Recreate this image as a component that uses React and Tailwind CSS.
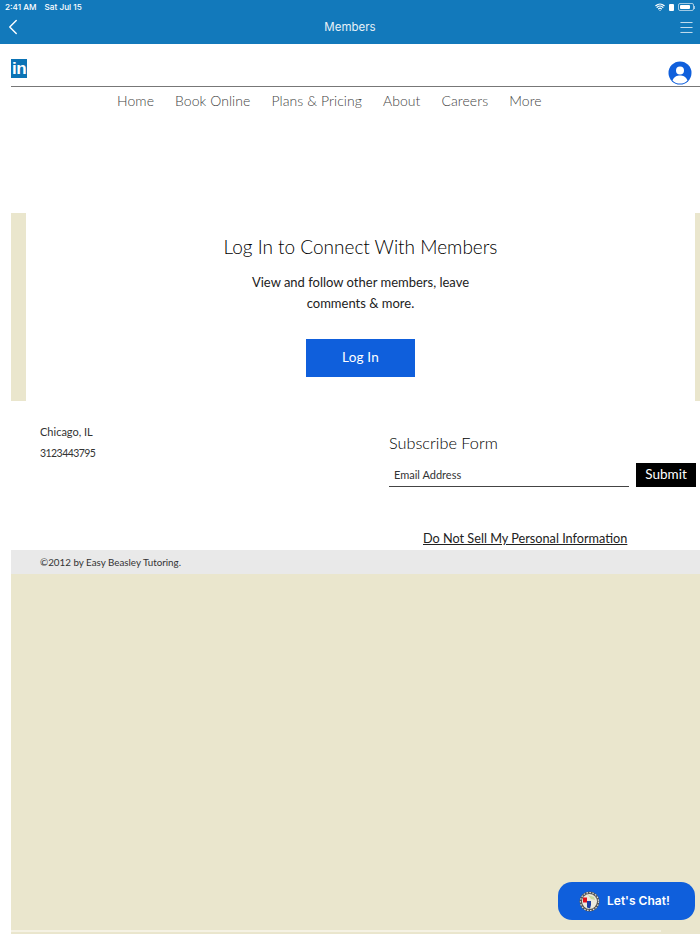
import { ChevronLeft, Menu, Wifi } from 'lucide-react'

const raleway = "font-['Lato','Open_Sans',sans-serif]"

const navLinks = ['Home', 'Book Online', 'Plans & Pricing', 'About', 'Careers', 'More']

function AppBar() {
  return (
    <header className="bg-[#1279bb] h-11 text-white font-['Inter',sans-serif]">
      <div className="flex justify-between items-center h-[14px] pl-[5px] pr-[5px] text-[8.2px] leading-none">
        <div className="flex gap-[8px] font-medium">
          <span>2:41 AM</span>
          <span>Sat Jul 15</span>
        </div>
        <div className="flex items-center gap-1">
          <Wifi size={10} strokeWidth={3} />
          <div className="w-[5px] h-[7px] rounded-[1px] bg-white" />
          <div className="flex items-center">
            <div className="w-[16px] h-[8px] rounded-[2px] border border-white/60 p-[1px]">
              <div className="h-full w-[10px] bg-white rounded-[1px]" />
            </div>
            <div className="w-[1px] h-[3px] bg-white/60" />
          </div>
        </div>
      </div>
      <div className="grid grid-cols-[1fr_auto_1fr] items-center h-[26px]">
        <ChevronLeft size={26} strokeWidth={1.3} />
        <span className="text-[11.5px] pt-[2px] opacity-90">Members</span>
        <Menu size={17} strokeWidth={1.2} className="opacity-90 justify-self-end mr-[5px]" />
      </div>
    </header>
  )
}

function SiteHeader() {
  return (
    <div className="ml-[11px] h-[43px] border-b border-[#777] flex justify-between items-end">
      <div className="mb-[8px] w-[16px] h-[19px] bg-[#0b73b5] text-white flex items-end justify-center overflow-hidden">
        <span className="font-['Liberation_Sans',sans-serif] font-bold text-[17px] leading-[18px] tracking-[-0.5px]">in</span>
      </div>
      <svg width="24" height="24" viewBox="0 0 24 24" className="mr-[8.5px] mb-[1px]">
        <circle cx="12" cy="12" r="11.5" fill="#0f5fdc" />
        <circle cx="12" cy="9.5" r="4" fill="#fff" />
        <path d="M4.5 19.5C6 15.5 9 14.5 12 14.5s6 1 7.5 5C17.5 22 14.5 22.5 12 22.5s-5.5-.5-7.5-3z" fill="#fff" />
      </svg>
    </div>
  )
}

function Nav() {
  return (
    <nav className="flex gap-[21px] pl-[117px] pt-[4px] h-[126px] text-[14px] leading-[20px] text-[#444] font-['Lato',sans-serif] font-light tracking-[0.07px]">
      {navLinks.map(l => (
        <a key={l} className="whitespace-nowrap">{l}</a>
      ))}
    </nav>
  )
}

function LoginBand() {
  return (
    <section className="flex h-[188px] ml-[11px]">
      <div className="w-[15px] bg-[#eae6cd]" />
      <div className={`flex-1 flex flex-col items-center text-black ${raleway}`}>
        <h1 className="mt-[22px] text-[19px] leading-[24px] font-light">Log In to Connect With Members</h1>
        <p className="mt-[13px] text-[13px] leading-[21px] text-center text-[#222]">
          View and follow other members, leave<br />comments &amp; more.
        </p>
        <button className="mt-[25px] w-[109px] h-[38px] pb-[2px] bg-[#0f5fdc] text-white text-[13.5px] tracking-[0.2px]">Log In</button>
      </div>
      <div className="w-[5px] bg-[#eae6cd]" />
    </section>
  )
}

function Footer() {
  return (
    <footer className={`flex h-[149px] ${raleway}`}>
      <div className="w-[389px] pl-[40px] pt-[20px] text-[11px] leading-[21.5px] text-[#333]">
        <p>Chicago, IL</p>
        <p className="text-[10.5px] tracking-[-0.55px]">3123443795</p>
      </div>
      <div className="flex-1 flex flex-col">
        <h2 className="mt-[32px] text-[16.3px] leading-[20px] text-black font-light">Subscribe Form</h2>
        <div className="flex mt-[10px] h-[24px]">
          <div className="w-[240px] border-b border-[#444] pl-[5px] text-[11px] leading-[23px] text-[#333]">Email Address</div>
          <button className="ml-[7px] w-[60px] pb-[2px] bg-black text-white text-[13.5px] leading-[22px]">Submit</button>
        </div>
        <a className="mt-[43px] ml-[34px] text-[12.7px] leading-[17px] text-[#222] underline whitespace-nowrap">Do Not Sell My Personal Information</a>
      </div>
    </footer>
  )
}

function ChatButton() {
  return (
    <button className="absolute left-[558px] top-[882px] w-[137px] h-[38px] rounded-[14px] bg-[#0f5fdc] flex items-center pl-[21px] gap-[7px] text-white font-['Inter',sans-serif] font-semibold text-[12px]">
      <svg width="21" height="21" viewBox="0 0 21 21">
        <circle cx="10.5" cy="10.5" r="10" fill="#555" />
        <circle cx="10.5" cy="10.5" r="9" fill="none" stroke="#ddd" strokeWidth="1.2" strokeDasharray="1.5 1.5" />
        <circle cx="10.5" cy="10.5" r="7.5" fill="#ece9dc" />
        <rect x="4" y="6.5" width="4" height="5" fill="#e0101a" />
        <path d="M8 10h4v4l-1 3.5-3-1z" fill="#1a3fa8" />
        <path d="M9 4l6 2 1 3-4-1z" fill="#c8d8a0" />
      </svg>
      <span>Let's Chat!</span>
    </button>
  )
}

export default function App() {
  return (
    <div className="relative w-[700px] h-[934px] overflow-hidden bg-white">
      <AppBar />
      <SiteHeader />
      <Nav />
      <LoginBand />
      <Footer />
      <div className={`ml-[11px] h-[24px] bg-[#e9e9e9] pl-[29px] text-[9.8px] leading-[24px] text-[#333] ${raleway}`}>
        ©2012 by Easy Beasley Tutoring.
      </div>
      <div className="ml-[11px] h-[360px] pt-[356px] bg-[#eae6cd]">
        <div className="mr-[39px] h-[2px] bg-[#f5f2e4]" />
      </div>
      <ChatButton />
    </div>
  )
}
